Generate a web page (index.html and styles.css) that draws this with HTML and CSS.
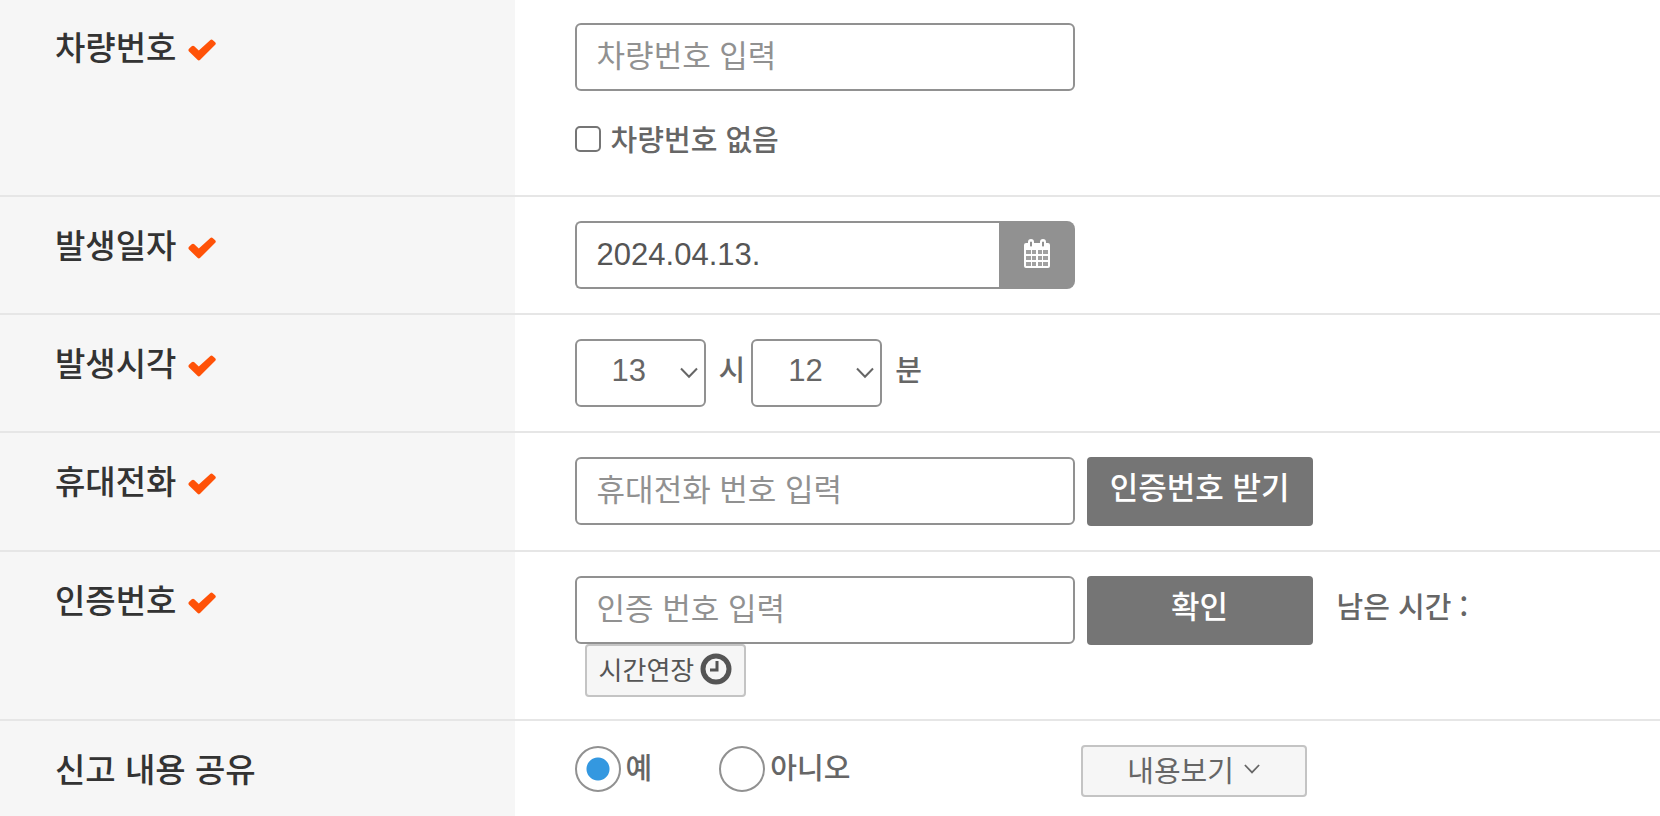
FILE: index.html
```html
<!DOCTYPE html>
<html lang="ko">
<head>
  <meta charset="UTF-8">
  <meta name="viewport" content="width=device-width, initial-scale=1.0">
  <title>신고 내용 입력</title>
  <link rel="stylesheet" href="styles.css">
</head>
<body>

  <svg class="sprite" aria-hidden="true">
    <symbol id="icon-check" viewBox="0 0 28 22">
      <path d="M1 9.700 3.700 7.200Q5 6.100 6.300 7.200L10.800 11.400 22.100 1.200Q23.500 0 24.900 1.200L27.200 3.200Q28.400 4.500 27.200 5.800L12.200 20.800Q10.800 22 9.500 20.800L1 12.500Q-.2 11.100 1 9.700Z"/>
    </symbol>
    <symbol id="icon-arrow" viewBox="0 0 18 12">
      <path d="M1 1.500 9 9.800 17 1.500" fill="none" stroke="currentColor" stroke-width="2"/>
    </symbol>
  </svg>

  <form class="report-form">
    <div class="row">
      <div class="row-title">
        <label for="car-number">차량번호</label>
        <svg class="check"><use href="#icon-check"/></svg>
      </div>
      <div class="row-body">
        <input class="text-input" type="text" id="car-number" placeholder="차량번호 입력">
        <div class="no-number">
          <input class="checkbox" type="checkbox" id="no-number">
          <label for="no-number">차량번호 없음</label>
        </div>
      </div>
    </div>

    <div class="row">
      <div class="row-title">
        <label for="date">발생일자</label>
        <svg class="check"><use href="#icon-check"/></svg>
      </div>
      <div class="row-body">
        <div class="date-box">
          <input class="text-input date-input" type="text" id="date" value="2024.04.13.">
          <button class="calendar-btn" type="button" aria-label="달력">
            <svg width="28" height="30" viewBox="0 0 28 30">
              <path fill="#fff" fill-opacity=".15" d="M3 11H25V27H3Z"/>
              <path fill="#fff" fill-rule="evenodd" d="M3 4H5V3A3 3 0 0 1 11 3V4H17V3A3 3 0 0 1 23 3V4H25Q27 4 27 6V27Q27 29 25 29H3Q1 29 1 27V6Q1 4 3 4ZM7 3V7Q8 8 9 7V3Q8 2 7 3ZM19 3V7Q20 8 21 7V3Q20 2 19 3ZM3 11V15H8V11ZM9 11V15H13V11ZM15 11V15H19V11ZM20 11V15H25V11ZM3 17V21H8V17ZM9 17V21H13V17ZM15 17V21H19V17ZM20 17V21H25V17ZM3 23V27H8V23ZM9 23V27H13V23ZM15 23V27H19V23ZM20 23V27H25V23Z"/>
            </svg>
          </button>
        </div>
      </div>
    </div>

    <div class="row">
      <div class="row-title">
        <label for="hour">발생시각</label>
        <svg class="check"><use href="#icon-check"/></svg>
      </div>
      <div class="row-body">
        <div class="select-box">
          <select id="hour"><option>13</option></select>
          <svg class="arrow"><use href="#icon-arrow"/></svg>
        </div>
        <label class="unit" for="hour">시</label>
        <div class="select-box">
          <select id="minute"><option>12</option></select>
          <svg class="arrow"><use href="#icon-arrow"/></svg>
        </div>
        <label class="unit" for="minute">분</label>
      </div>
    </div>

    <div class="row">
      <div class="row-title">
        <label for="phone">휴대전화</label>
        <svg class="check"><use href="#icon-check"/></svg>
      </div>
      <div class="row-body">
        <input class="text-input" type="tel" id="phone" placeholder="휴대전화 번호 입력">
        <button class="dark-btn" type="button">인증번호 받기</button>
      </div>
    </div>

    <div class="row">
      <div class="row-title">
        <label for="code">인증번호</label>
        <svg class="check"><use href="#icon-check"/></svg>
      </div>
      <div class="row-body">
        <input class="text-input" type="text" id="code" placeholder="인증 번호 입력">
        <button class="dark-btn" type="button">확인</button>
        <span class="remain">남은 시간 :</span>
        <div class="extend">
          <button class="extend-btn" type="button">
            시간연장
            <svg width="32" height="32" viewBox="0 0 32 32" fill="none" stroke="currentColor">
              <circle cx="16" cy="16" r="13" stroke-width="5"/>
              <path d="M17 8V17H10" stroke-width="3"/>
            </svg>
          </button>
        </div>
      </div>
    </div>

    <div class="row last">
      <div class="row-title">신고 내용 공유</div>
      <div class="row-body">
        <div class="radios">
          <label class="radio"><input type="radio" name="share" checked><span>예</span></label>
          <label class="radio"><input type="radio" name="share"><span>아니오</span></label>
        </div>
        <button class="view-btn" type="button">
          내용보기
          <svg class="arrow-small"><use href="#icon-arrow"/></svg>
        </button>
      </div>
    </div>
  </form>

</body>
</html>
```
FILE: styles.css
```css
* {
  box-sizing: border-box;
}

body {
  margin: 0;
  background-color: #fff;
  color: #666;
  font-family: "Noto Sans CJK KR", sans-serif;
  font-size: 29px;
  font-weight: 500;
  line-height: 46px;
}

input,
select,
button {
  margin: 0;
  font-family: inherit;
  font-weight: inherit;
}

button {
  cursor: pointer;
}

.sprite {
  display: none;
}

.report-form {
  display: flex;
  flex-direction: column;
  min-height: 100vh;
}

.row {
  display: flex;
  border-bottom: 2px solid #e6e6e6;
}

.row.last {
  flex: 1;
  border-bottom: none;
}

.row-title {
  display: flex;
  align-items: flex-start;
  gap: 12px;
  width: 31%;
  padding: 24px 0 0 55px;
  background-color: #f6f6f6;
  color: #333;
  font-size: 33px;
}

.check {
  width: 28px;
  height: 22px;
  margin-top: 16px;
  fill: #ff5208;
}

.row-body {
  display: flex;
  flex-wrap: wrap;
  align-items: flex-start;
  flex: 1;
  padding: 24px 0 24px 60px;
}

.row:first-child .row-title,
.row:first-child .row-body {
  padding-top: 23px;
}

.text-input {
  width: 500px;
  height: 68px;
  padding: 0 20px 8px;
  border: 2px solid #919191;
  border-radius: 6px;
  background-color: #fff;
  color: #555;
  font-size: 31px;
}

.text-input::placeholder {
  color: #919191;
  font-weight: 400;
  opacity: 1;
}

/* 차량번호 없음 */
.no-number {
  display: flex;
  align-items: flex-start;
  gap: 10px;
  width: 100%;
  margin-top: 24px;
  padding-bottom: 10px;
}

.checkbox {
  appearance: none;
  width: 26px;
  height: 26px;
  margin-top: 11px;
  border: 2px solid #757575;
  border-radius: 5px;
  background-color: #fff;
}

/* 발생일자 */
.date-box {
  display: flex;
  width: 500px;
}

.date-input {
  flex: 1;
  min-width: 0;
  padding-bottom: 0;
  border-right: none;
  border-radius: 6px 0 0 6px;
  font-family: "Liberation Sans", sans-serif;
}

.calendar-btn {
  display: flex;
  align-items: center;
  justify-content: center;
  width: 76px;
  height: 68px;
  padding: 0 0 2px;
  border: none;
  border-radius: 0 8px 8px 0;
  background-color: #919191;
}

/* 발생시각 */
.select-box {
  position: relative;
}

.select-box select {
  appearance: none;
  display: block;
  width: 131px;
  height: 68px;
  padding: 0 30px 6px 35px;
  border: 2px solid #919191;
  border-radius: 6px;
  background-color: #fff;
  color: #666;
  font-family: "Liberation Sans", sans-serif;
  font-size: 31px;
}

.arrow {
  position: absolute;
  top: 28px;
  right: 8px;
  width: 18px;
  height: 12px;
  pointer-events: none;
}

.unit {
  padding: 6px 6px 0 13px;
}

/* 버튼 */
.dark-btn {
  width: 226px;
  height: 69px;
  margin-left: 12px;
  padding: 0 0 12px;
  border: none;
  border-radius: 4px;
  background-color: #757575;
  color: #fff;
  font-size: 31px;
}

.remain {
  margin-left: 24px;
  padding-top: 6px;
}

.extend {
  width: 100%;
  margin: -1px 0 -2px;
  padding-left: 10px;
}

.extend-btn,
.view-btn {
  display: flex;
  align-items: center;
  justify-content: center;
  gap: 6px;
  height: 53px;
  padding: 0 12px 4px;
  border: 2px solid #c4c4c4;
  border-radius: 4px;
  background-color: #f6f6f6;
  color: #555;
  font-size: 26px;
  font-weight: 400;
}

/* 신고 내용 공유 */
.radios {
  display: flex;
  gap: 67px;
  width: 506px;
}

.radio {
  display: flex;
  align-items: flex-start;
  gap: 5px;
}

.radio input {
  appearance: none;
  width: 46px;
  height: 46px;
  margin-top: 1px;
  border: 2px solid #919191;
  border-radius: 50%;
  background-color: #fff;
}

.radio input:checked {
  background-image: radial-gradient(circle, #3498e0 11px, transparent 12px);
}

.radio span {
  line-height: 42px;
}

.view-btn {
  gap: 10px;
  width: 226px;
  height: 52px;
  color: #666;
  font-size: 29px;
}

.arrow-small {
  width: 16px;
  height: 12px;
}
```
